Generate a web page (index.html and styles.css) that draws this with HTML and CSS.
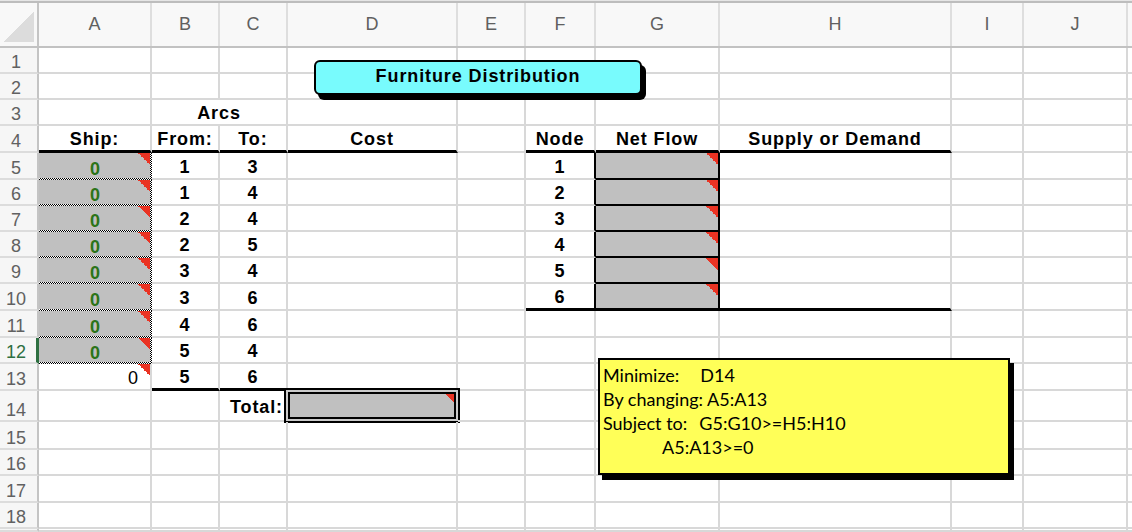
FILE: index.html
```html
<!DOCTYPE html>
<html>
<head>
<meta charset="utf-8">
<link rel="stylesheet" href="styles.css">
</head>
<body>
<div class="sheet">
  <div class="topbar"></div>
  <div class="row hdr">
    <div class="corner"></div>
    <div class="ch">A</div><div class="ch">B</div><div class="ch">C</div><div class="ch">D</div><div class="ch">E</div><div class="ch">F</div><div class="ch">G</div><div class="ch">H</div><div class="ch">I</div><div class="ch">J</div><div class="ch last"></div>
  </div>

  <div class="row h26"><div class="rh">1</div><div class="c"></div><div class="c"></div><div class="c"></div><div class="c"></div><div class="c"></div><div class="c"></div><div class="c"></div><div class="c"></div><div class="c"></div><div class="c"></div><div class="c x"></div></div>
  <div class="row h26"><div class="rh">2</div><div class="c"></div><div class="c"></div><div class="c"></div><div class="c"></div><div class="c"></div><div class="c"></div><div class="c"></div><div class="c"></div><div class="c"></div><div class="c"></div><div class="c x"></div></div>
  <div class="row h26"><div class="rh">3</div><div class="c"></div><div class="c span2">Arcs</div><div class="c"></div><div class="c"></div><div class="c"></div><div class="c"></div><div class="c"></div><div class="c"></div><div class="c"></div><div class="c x"></div></div>
  <div class="row h27"><div class="rh">4</div><div class="c tb">Ship:</div><div class="c tb">From:</div><div class="c tb">To:</div><div class="c tb">Cost</div><div class="c"></div><div class="c tb">Node</div><div class="c tb">Net Flow</div><div class="c tb">Supply or Demand</div><div class="c"></div><div class="c"></div><div class="c x"></div></div>

  <div class="row h27"><div class="rh">5</div><div class="c ship">0</div><div class="c">1</div><div class="c">3</div><div class="c"></div><div class="c"></div><div class="c fb">1</div><div class="c nf"></div><div class="c"></div><div class="c"></div><div class="c"></div><div class="c x"></div></div>
  <div class="row h26"><div class="rh">6</div><div class="c ship">0</div><div class="c">1</div><div class="c">4</div><div class="c"></div><div class="c"></div><div class="c fb">2</div><div class="c nf"></div><div class="c"></div><div class="c"></div><div class="c"></div><div class="c x"></div></div>
  <div class="row h26"><div class="rh">7</div><div class="c ship">0</div><div class="c">2</div><div class="c">4</div><div class="c"></div><div class="c"></div><div class="c fb">3</div><div class="c nf"></div><div class="c"></div><div class="c"></div><div class="c"></div><div class="c x"></div></div>
  <div class="row h26"><div class="rh">8</div><div class="c ship">0</div><div class="c">2</div><div class="c">5</div><div class="c"></div><div class="c"></div><div class="c fb">4</div><div class="c nf"></div><div class="c"></div><div class="c"></div><div class="c"></div><div class="c x"></div></div>
  <div class="row h26"><div class="rh">9</div><div class="c ship">0</div><div class="c">3</div><div class="c">4</div><div class="c"></div><div class="c"></div><div class="c fb">5</div><div class="c nf"></div><div class="c"></div><div class="c"></div><div class="c"></div><div class="c x"></div></div>
  <div class="row h27"><div class="rh">10</div><div class="c ship">0</div><div class="c">3</div><div class="c">6</div><div class="c"></div><div class="c"></div><div class="c fb tb">6</div><div class="c nf tb"></div><div class="c tb"></div><div class="c"></div><div class="c"></div><div class="c x"></div></div>
  <div class="row h27"><div class="rh">11</div><div class="c ship">0</div><div class="c">4</div><div class="c">6</div><div class="c"></div><div class="c"></div><div class="c"></div><div class="c"></div><div class="c"></div><div class="c"></div><div class="c"></div><div class="c x"></div></div>
  <div class="row h26"><div class="rh sel">12</div><div class="c ship">0</div><div class="c">5</div><div class="c">4</div><div class="c"></div><div class="c"></div><div class="c"></div><div class="c"></div><div class="c"></div><div class="c"></div><div class="c"></div><div class="c x"></div></div>
  <div class="row h27"><div class="rh">13</div><div class="c plain">0</div><div class="c tb">5</div><div class="c tb">6</div><div class="c"></div><div class="c"></div><div class="c"></div><div class="c"></div><div class="c"></div><div class="c"></div><div class="c"></div><div class="c x"></div></div>
  <div class="row h31"><div class="rh">14</div><div class="c"></div><div class="c"></div><div class="c label">Total:</div><div class="c totc"><div class="tbox"></div></div><div class="c"></div><div class="c"></div><div class="c"></div><div class="c"></div><div class="c"></div><div class="c"></div><div class="c x"></div></div>
  <div class="row h28"><div class="rh">15</div><div class="c"></div><div class="c"></div><div class="c"></div><div class="c"></div><div class="c"></div><div class="c"></div><div class="c"></div><div class="c"></div><div class="c"></div><div class="c"></div><div class="c x"></div></div>
  <div class="row h26"><div class="rh">16</div><div class="c"></div><div class="c"></div><div class="c"></div><div class="c"></div><div class="c"></div><div class="c"></div><div class="c"></div><div class="c"></div><div class="c"></div><div class="c"></div><div class="c x"></div></div>
  <div class="row h27"><div class="rh">17</div><div class="c"></div><div class="c"></div><div class="c"></div><div class="c"></div><div class="c"></div><div class="c"></div><div class="c"></div><div class="c"></div><div class="c"></div><div class="c"></div><div class="c x"></div></div>
  <div class="row h26"><div class="rh">18</div><div class="c"></div><div class="c"></div><div class="c"></div><div class="c"></div><div class="c"></div><div class="c"></div><div class="c"></div><div class="c"></div><div class="c"></div><div class="c"></div><div class="c x"></div></div>
  <div class="row h3"><div class="rh"></div><div class="c"></div><div class="c"></div><div class="c"></div><div class="c"></div><div class="c"></div><div class="c"></div><div class="c"></div><div class="c"></div><div class="c"></div><div class="c"></div><div class="c x"></div></div>

  <div class="title">Furniture Distribution</div>
  <div class="note">
    <div class="nl">Minimize:<span class="g1">D14</span></div>
    <div class="nl">By changing: A5:A13</div>
    <div class="nl">Subject to:<span class="g2">G5:G10&gt;=H5:H10</span></div>
    <div class="nl ind">A5:A13&gt;=0</div>
  </div>
</div>
</body>
</html>
```

FILE: styles.css
```css
* { box-sizing: border-box; }
html, body { margin: 0; padding: 0; }
body {
  background: #fff;
  font-family: "Liberation Sans", Arial, sans-serif;
  --tri: linear-gradient(to bottom left, #ea3323 50%, transparent 50%);
  --chk: conic-gradient(#000 0 25%, #fff 0 50%, #000 0 75%, #fff 0);
}
.sheet {
  position: relative;
  width: 1132px;
  height: 532px;
  overflow: hidden;
}
.topbar {
  height: 3px;
  background: linear-gradient(#e6e6e6 0 1px, #bdbdbd 1px);
}
.row {
  display: grid;
  grid-template-columns: 39px 113px 68px 68px 170px 68px 70px 124px 232px 72px 104px 1fr;
}
.h26 { height: 26px; }
.h27 { height: 27px; }
.h28 { height: 28px; }
.h31 { height: 31px; }
.h3 { height: 3px; }

.hdr {
  height: 45px;
  background: #f8f8f8;
  border-bottom: 2px solid #c2c2c2;
}
.corner {
  border-right: 2px solid #c4c4c4;
  background: linear-gradient(to top left, #dcdcdc 50%, transparent 50%) 4px 9px / 30px 30px no-repeat;
}
.ch {
  border-right: 2px solid #dedede;
  display: flex;
  align-items: center;
  justify-content: center;
  font-size: 18px;
  color: #606060;
}
.ch.last { border-right: 0; }

.rh {
  background: #f6f6f6;
  border-right: 2px solid #c4c4c4;
  border-bottom: 2px solid #dcdcdc;
  display: flex;
  align-items: flex-end;
  justify-content: center;
  padding-right: 5px;
  font-size: 18px;
  line-height: 20px;
  color: #616161;
  overflow: hidden;
}
.rh.sel {
  color: #2e6f41;
  border-right: 3px solid #2e6f41;
  padding-right: 4px;
}

.c {
  border-right: 2px solid #d8d8d8;
  border-bottom: 2px solid #d8d8d8;
  display: flex;
  align-items: flex-end;
  justify-content: center;
  padding-bottom: 1px;
  font-weight: bold;
  font-size: 18px;
  line-height: 20px;
  letter-spacing: 0.9px;
  white-space: nowrap;
  min-width: 0;
  color: #000;
}
.c.x { border-right: 0; }
.span2 { grid-column: span 2; }
.tb { border-bottom: 3px solid #000; }
.fb { border-right-color: #000; }

.ship {
  border: 0;
  color: #2c7418;
  background:
    var(--tri) right 2px top 0 / 12px 12px no-repeat,
    var(--chk) right top / 2px 2px repeat-y,
    var(--chk) left bottom / 2px 2px repeat-x,
    #c0c0c0;
}
.nf {
  border-right: 2px solid #000;
  border-bottom: 2px solid #000;
  background: var(--tri) right top / 12px 12px no-repeat, #c0c0c0;
}
.nf.tb { border-bottom: 3px solid #000; }
.plain {
  font-weight: normal;
  letter-spacing: 0;
  justify-content: flex-end;
  padding-right: 12px;
  background: var(--tri) right top / 12px 12px no-repeat;
}
.label {
  justify-content: flex-end;
  padding-right: 3px;
  padding-bottom: 3px;
}
.totc {
  align-items: stretch;
  padding: 0;
}
.tbox {
  flex: 1;
  margin: -3px -4px -3px -4px;
  border: 2px solid #000;
  box-shadow: inset 0 0 0 2px #cacaca, inset 0 0 0 4px #000;
  background: var(--tri) right 4px top 4px / 8px 8px no-repeat, #c0c0c0;
}

.title {
  position: absolute;
  left: 314px;
  top: 60px;
  width: 328px;
  height: 35px;
  border: 2px solid #000;
  border-radius: 6px;
  background: #78fbfd;
  box-shadow: 4px 5px 0 #000;
  display: flex;
  align-items: center;
  justify-content: center;
  font-weight: bold;
  font-size: 18px;
  letter-spacing: 0.9px;
  padding-bottom: 2px;
}
.note {
  position: absolute;
  left: 598px;
  top: 358px;
  width: 412px;
  height: 117px;
  border: 2px solid #000;
  background: #ffff58;
  box-shadow: 4px 5px 0 #000;
  padding: 3px 3px;
  font-family: Lato, "Liberation Sans", sans-serif;
  font-size: 18px;
  line-height: 24px;
  color: #000;
}
.nl { white-space: nowrap; }
.g1 { margin-left: 21px; }
.g2 { margin-left: 12px; }
.ind { padding-left: 59px; }
```
